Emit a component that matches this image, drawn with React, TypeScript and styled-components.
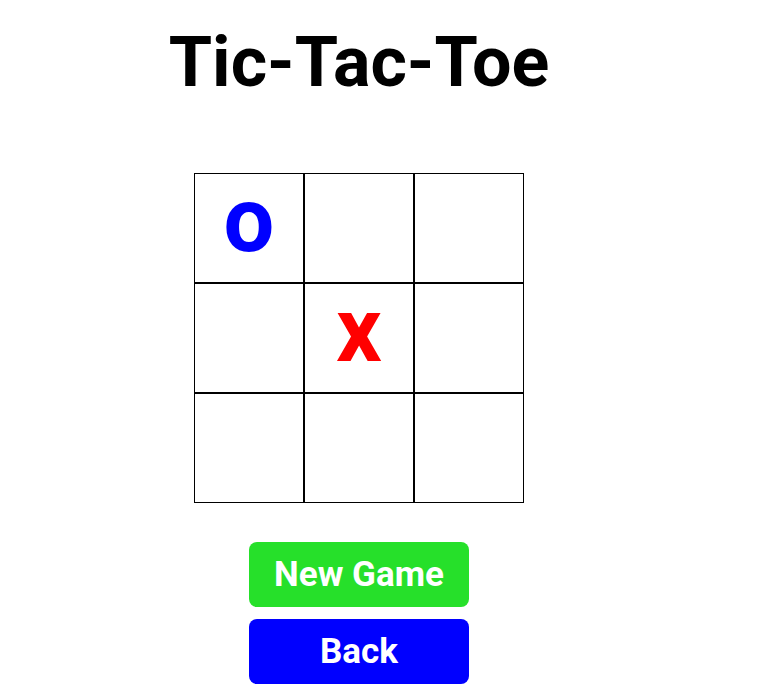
import styled, { createGlobalStyle } from 'styled-components';

const GlobalStyle = createGlobalStyle`
	body {
		margin: 8px;
		background: #ffffff;
		font-family: Roboto, "Liberation Sans", Arial, sans-serif;
	}
`;

const Page = styled.div`
	width: 702px;
	display: flex;
	flex-direction: column;
	align-items: center;
`;

const Title = styled.h1`
	margin: 12px 0 0;
	font-size: 70px;
	font-weight: 700;
	line-height: 84px;
	color: #000;
`;

const Board = styled.div`
	margin-top: 69px;
	display: grid;
	grid-template-columns: repeat(3, 110px);
	grid-template-rows: repeat(3, 110px);
`;

const Cell = styled.div<{ $mark: string }>`
	box-sizing: border-box;
	border: 1px solid #000;
	display: flex;
	align-items: center;
	justify-content: center;
	padding-bottom: 14px;
	font-size: 90px;
	font-weight: 700;
	line-height: 1;
	color: ${(p) => (p.$mark === 'x' ? '#ff0000' : '#0000ff')};
	cursor: pointer;
`;

const Controls = styled.div`
	margin-top: 39px;
	display: flex;
	flex-direction: column;
	gap: 12px;
`;

const Button = styled.button<{ $bg: string }>`
	width: 220px;
	height: 65px;
	border: none;
	border-radius: 8px;
	background: ${(p) => p.$bg};
	color: #fff;
	font-family: Roboto, "Liberation Sans", Arial, sans-serif;
	font-size: 35px;
	font-weight: 700;
	cursor: pointer;
`;

const board = ['o', '', '', '', 'x', '', '', '', ''];

function App() {
	return (
		<>
			<GlobalStyle />
			<Page>
				<Title>Tic-Tac-Toe</Title>
				<Board>
					{board.map((mark, idx) => (
						<Cell key={idx} $mark={mark}>
							{mark}
						</Cell>
					))}
				</Board>
				<Controls>
					<Button $bg="#26e02a">New Game</Button>
					<Button $bg="#0000ff">Back</Button>
				</Controls>
			</Page>
		</>
	);
}

export default App;
